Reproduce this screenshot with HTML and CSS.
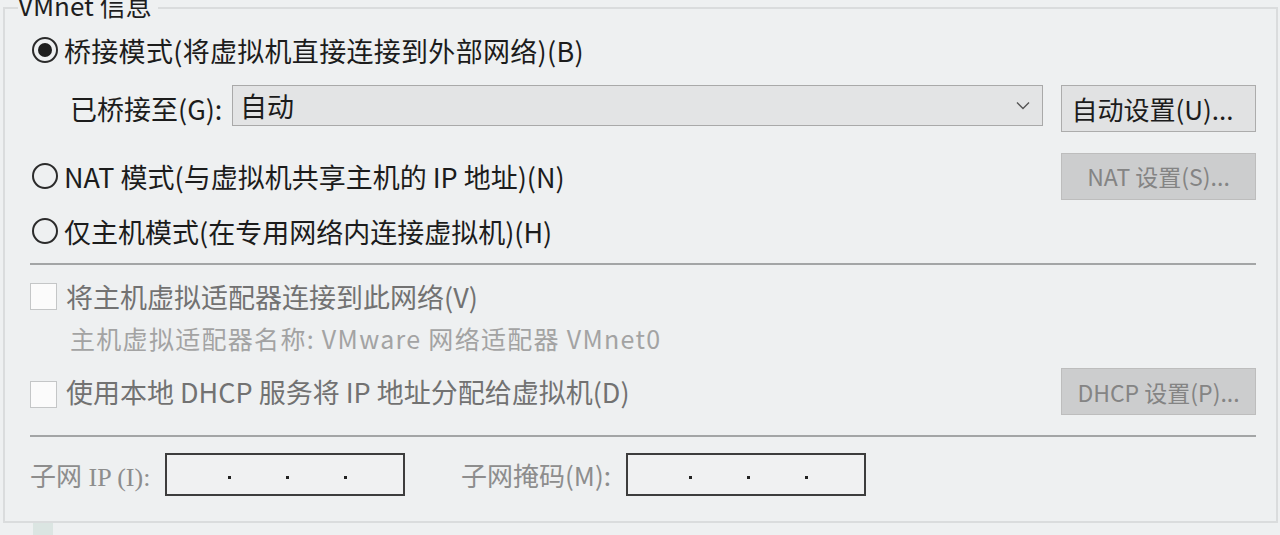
FILE: index.html
```html
<!DOCTYPE html>
<html lang="zh-CN">
<head>
<meta charset="utf-8">
<title>VMnet 信息</title>
<link rel="stylesheet" href="styles.css">
</head>
<body>
<fieldset class="group">
  <legend class="group-title">VMnet 信息</legend>

  <div class="row row-1">
    <span class="radio checked"></span>
    <span class="label">桥接模式(将虚拟机直接连接到外部网络)(B)</span>
  </div>

  <div class="row row-2">
    <span class="field-label">已桥接至(G):</span>
    <div class="select">
      <span class="select-value">自动</span>
      <svg class="chevron" width="14" height="9" viewBox="0 0 14 9"><path d="M1 1.5 L7 7.5 L13 1.5" fill="none" stroke="#555" stroke-width="1.4"/></svg>
    </div>
    <button class="btn">自动设置(U)...</button>
  </div>

  <div class="row row-3">
    <span class="radio"></span>
    <span class="label grow">NAT 模式(与虚拟机共享主机的 IP 地址)(N)</span>
    <button class="btn disabled">NAT 设置(S)...</button>
  </div>

  <div class="row row-4">
    <span class="radio"></span>
    <span class="label">仅主机模式(在专用网络内连接虚拟机)(H)</span>
  </div>

  <div class="sep sep-1"></div>

  <div class="row row-5">
    <span class="check"></span>
    <span class="label dim">将主机虚拟适配器连接到此网络(V)</span>
  </div>

  <div class="row row-6">
    <span class="subtext">主机虚拟适配器名称: VMware 网络适配器 VMnet0</span>
  </div>

  <div class="row row-7">
    <span class="check"></span>
    <span class="label dim grow">使用本地 DHCP 服务将 IP 地址分配给虚拟机(D)</span>
    <button class="btn disabled">DHCP 设置(P)...</button>
  </div>

  <div class="sep sep-2"></div>

  <div class="row row-8">
    <span class="ip-label">子网 IP (I):</span>
    <div class="ip-box"><i></i><i></i><i></i></div>
    <span class="ip-label mask-label">子网掩码(M):</span>
    <div class="ip-box"><i></i><i></i><i></i></div>
  </div>
</fieldset>
<div class="corner-tab"></div>
</body>
</html>
```

FILE: styles.css
```css
html, body {
  margin: 0;
  padding: 0;
  background: #eef0f1;
  overflow: hidden;
}
body {
  width: 1280px;
  height: 535px;
  font-family: "Noto Sans CJK SC", "Noto Sans", sans-serif;
  color: #1c1c1c;
}
.group {
  margin: -8px 2px 0 3px;
  padding: 6px 20px 25px 25px;
  border: 2px solid #dadcdd;
  display: flex;
  flex-direction: column;
  min-width: 0;
}
.group-title {
  margin-left: -12px;
  padding: 0 6px 6px 0;
  font-size: 26px;
  line-height: 26px;
  color: #1e1e1e;
}
.row {
  display: flex;
  align-items: center;
  font-size: 27px;
}
.row-1 { height: 40px; }
.row-2 { height: 47px; margin-top: 15px; }
.row-3 { height: 46px; margin-top: 21px; }
.row-4 { height: 40px; margin-top: 12px; }
.row-5 { height: 40px; margin-top: 11px; }
.row-6 { height: 30px; margin-top: 7px; }
.row-7 { height: 47px; margin-top: 15px; }
.row-8 { height: 43px; margin-top: 16px; }
.sep {
  height: 0;
  border-top: 2px solid #a3a5a6;
}
.sep-1 { margin-top: 12px; }
.sep-2 { margin-top: 20px; }

.label { white-space: nowrap; line-height: 1; }
.row-1 .label { letter-spacing: 0.3px; }
.grow { flex: 1; }
.dim { color: #727272; }

.radio {
  width: 26px;
  height: 26px;
  box-sizing: border-box;
  border: 2px solid #2b2b2b;
  border-radius: 50%;
  margin: 0 6px 0 2px;
  flex: none;
  display: flex;
  align-items: center;
  justify-content: center;
}
.radio.checked { border-width: 2.5px; }
.radio.checked::after {
  content: "";
  width: 14px;
  height: 14px;
  border-radius: 50%;
  background: #1e1e1e;
}
.check {
  width: 27px;
  height: 27px;
  box-sizing: border-box;
  border: 1px solid #c4c6c7;
  background: #fbfbfb;
  margin-right: 9px;
  flex: none;
}
.row-7 .check { align-self: center; margin-top: 5px; }

.field-label {
  margin-left: 40px;
  width: 162px;
  white-space: nowrap;
}
.select {
  width: 811px;
  height: 41px;
  align-self: flex-start;
  box-sizing: border-box;
  border: 1px solid #a9a9a9;
  background: #e3e4e5;
  display: flex;
  align-items: center;
  padding: 0 12px 0 7px;
}
.select-value { flex: 1; }
.chevron { display: block; }

.btn {
  margin-left: auto;
  width: 195px;
  height: 47px;
  box-sizing: border-box;
  border: 1.5px solid #acacac;
  background: #e1e2e3;
  font-family: "Noto Sans CJK SC", "Noto Sans", sans-serif;
  font-size: 26px;
  color: #1c1c1c;
  padding: 0 0 0 0;
  flex: none;
}
.row-2 .btn { margin-left: 18px; padding-right: 12px; }
.btn.disabled {
  background: #cccdce;
  border-color: #bdbdbd;
  color: #848484;
  font-size: 23px;
}
.subtext {
  margin-left: 40px;
  font-size: 25px;
  color: #a3a3a3;
  white-space: nowrap;
  letter-spacing: 1.3px;
}
.ip-label {
  font-family: "Liberation Serif", "Noto Sans CJK SC", serif;
  font-size: 26px;
  color: #8d8d8d;
  white-space: nowrap;
  width: 135px;
}
.mask-label {
  margin-left: 56px;
  width: 165px;
  font-family: "Noto Sans CJK SC", sans-serif;
  font-size: 26px;
}
.ip-box {
  width: 240px;
  height: 43px;
  box-sizing: border-box;
  border: 2px solid #3d3d3d;
  background: #f0f1f2;
  display: flex;
  align-items: center;
  padding-left: 61px;
  gap: 55px;
}
.ip-box i {
  width: 3px;
  height: 3px;
  background: #222;
  margin-top: 6px;
}
.corner-tab {
  width: 20px;
  height: 14px;
  margin-left: 33px;
  background: #dbe5e2;
}
```
